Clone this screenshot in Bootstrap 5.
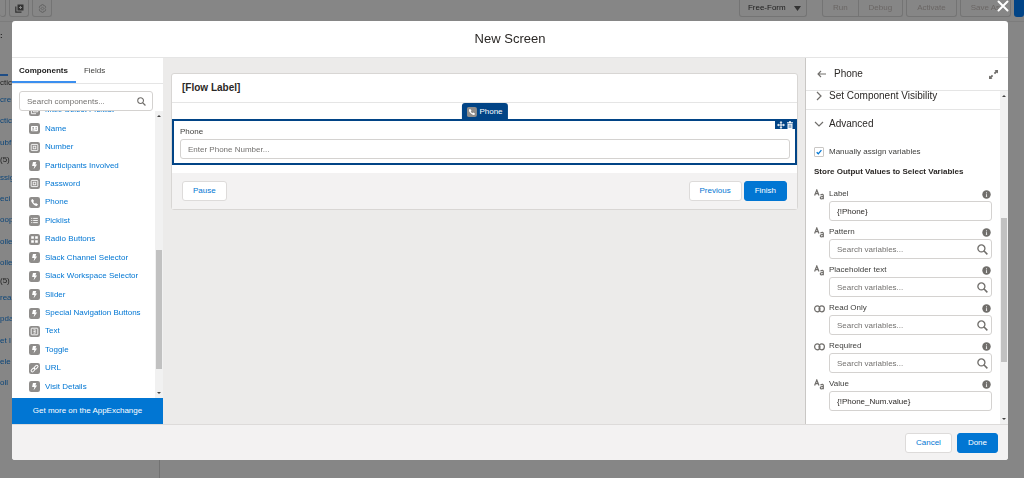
<!DOCTYPE html>
<html lang="en">
<head>
<meta charset="utf-8">
<meta name="viewport" content="width=device-width, initial-scale=1">
<title>New Screen</title>
<link href="https://cdn.jsdelivr.net/npm/bootstrap@5.3.0/dist/css/bootstrap.min.css" rel="stylesheet">
<style>
body{font-family:"Liberation Sans",Arial,sans-serif;font-size:8px;line-height:12px;color:#2b2826;background:#868686;overflow:hidden}
a{color:#0176d3;text-decoration:none}
svg{display:block;flex:none}
.backdrop-page{position:fixed;inset:0;color:#222}
.tb-row{height:22px;border-bottom:1px solid #7c7c7c}
.tb-btn{height:17px;border:1px solid #747474;border-top:0;border-radius:0 0 3px 3px;background:transparent;color:#6a6664;font-size:8px;line-height:12px;padding:0 10px}
.tb-edge{width:6px;padding:0;border-left:0}
.tb-icon{width:20px;padding:0;margin-left:3px}
.tb-select{color:#1c1c1c;width:68px;padding:0 5px 0 8px}
.tb-gap{margin-left:3px}
.tb-first{margin-left:15px;border-radius:0 0 0 3px}
.tb-last{border-left:0;border-radius:0 0 3px 0}
.tb-save{background:#014486;border:0;width:10px;padding:0}
.side-strip{width:160px;border-right:1px solid #727272}
.side-tab{height:55px;padding-top:8px;font-weight:700}
.side-tab span{display:block;width:8px;height:34px;border-bottom:2px solid #1f4d85}
.side-strip a{color:#0b4579}
.dlg-wrap{position:relative;height:100vh;padding:21px 16px 18px 12px}
.dlg{background:#fff;border-radius:3px;overflow:hidden}
.dlg-mid{min-height:0}
.dlg-head{height:37px;border-bottom:1px solid #e5e5e5}
.dlg-head h1{font-size:13px;line-height:16px}
.dlg-close{position:absolute;right:15px;top:0;width:12px;height:12px;background:none;border:0}
.dlg-foot{height:36px;background:#f3f2f2;border-top:1px solid #dddbda;padding:0 10px;gap:5px}
.btn-s{font-size:8px;line-height:12px;padding:3px 10px;border:1px solid #dddbda;border-radius:3px;background:#fff;color:#0176d3}
.btn-p{background:#0176d3;border-color:#0176d3;color:#fff}
.left-col{width:151px}
.tabs{height:26px;border-bottom:1px solid #e5e5e5;padding-top:1px}
.tabs button{font-size:8px;line-height:12px;border:0;background:none;padding:6px 8px;color:#3e3e3c}
.tabs .on{font-weight:700;border-bottom:2px solid #3b8fef;color:#222;padding-left:7px}
.find{position:relative;margin:7px 10px 0 7px}
.inp{width:100%;height:20px;border:1px solid #d4d2d0;border-radius:3px;padding:0 7px;font-size:8px;line-height:12px;color:#2b2826;background:#fff;display:block}
.inp::placeholder{color:#747270;opacity:1}
.find svg{position:absolute;right:7px;top:6px}
.comp-list{padding-bottom:2px;overflow:hidden}
.comp-row{flex:1 0 0;gap:5px;padding-left:17px}
.comp-row:first-child{margin-top:-10px}
.sbar{width:8px;background:#f1f1f1;padding:3px 1px}
.sthumb{background:#c1c1c1}
.exch{height:26px;background:#0176d3;color:#fff}
.canvas-col{background:#ecebea;padding:15px 7px 15px 8px;min-width:0}
.flow-box{background:#fff;border:1px solid #d8d6d4;border-radius:3px}
.flow-head{height:29px;border-bottom:1px solid #e5e5e5;padding-left:10px}
.h10{font-size:10px;line-height:14px}
.sel{position:relative;margin:16px 0 8px;border:2px solid #014486;padding:5px 5px 4px 6px}
.sel label{margin-bottom:1px;color:#3e3e3c}
.sel-tab{position:absolute;left:50%;top:-18px;transform:translateX(-50%);height:17px;background:#014486;color:#fff;border-radius:3px 3px 0 0;padding:0 5px;gap:3px}
.sel-act{position:absolute;right:-1px;top:-1px;background:#014486;width:21px;height:9px;gap:1px}
.flow-foot{background:#f3f2f2;height:36px;padding:0 10px;gap:2px}
.right-col{width:203px;border-left:1px solid #c9c7c5}
.rhead{height:33px;border-bottom:1px solid #e5e5e5;padding:0 10px 0 11px;gap:8px}
.acc{flex:none;height:28px;padding-left:8px;gap:5px;color:#3e3e3c}
.acc.h10{color:#2b2826}
.acc-top{border-bottom:1px solid #e5e5e5;margin-top:-9px}
.sub-head{padding:0 8px;height:21px}
.fld{flex:none;padding:0 8px;gap:4px;margin-bottom:4px}
.fld>svg{margin-top:2px}
.fld-lab{height:14px;padding-right:1px;color:#3e3e3c}
.fld-mag{position:absolute;right:4px;top:5px}
.chk{width:10px;height:10px;appearance:none;border:1px solid #c9c7c5;border-radius:1px;margin:0;background:#fff}
.chk-box{position:relative;width:10px;height:10px}
.chk-box svg{position:absolute;left:2px;top:2px;pointer-events:none}
</style>
<script src="https://cdn.jsdelivr.net/npm/bootstrap@5.3.0/dist/js/bootstrap.bundle.min.js"></script>
</head>
<body>
<svg width="0" height="0" class="position-absolute">
<defs>
<symbol id="mag" viewBox="0 0 10 10"><circle cx="4" cy="4" r="3.2" fill="none" stroke="#706e6b" stroke-width="1.2"/><path d="M6.2 6.2 9.4 9.4" stroke="#706e6b" stroke-width="1.4"/></symbol>
<symbol id="tile" viewBox="0 0 10 10"><rect width="10" height="10" rx="2" fill="#8f8d8b"/></symbol>
<symbol id="bolt" viewBox="0 0 10 10"><use href="#tile"/><path d="M3.6 1.8H6.6L5.8 4H7.4L4.2 8.3 4.9 5.4H2.8Z" fill="#fff"/></symbol>
<symbol id="boxed" viewBox="0 0 10 10"><use href="#tile"/><rect x="2" y="2.2" width="6" height="5.6" rx=".6" fill="none" stroke="#fff" stroke-width=".8"/><rect x="3.8" y="3.8" width="2.4" height="2.4" fill="none" stroke="#fff" stroke-width=".7"/></symbol>
<symbol id="idcard" viewBox="0 0 10 10"><use href="#tile"/><rect x="1.8" y="2.8" width="6.4" height="4.6" rx=".7" fill="#fff"/><circle cx="3.8" cy="4.4" r=".8" fill="#8f8d8b"/><path d="M2.7 6.4h2.2M5.8 4.3h1.5M5.8 5.7h1.5" stroke="#8f8d8b" stroke-width=".7"/></symbol>
<symbol id="tel" viewBox="0 0 10 10"><use href="#tile"/><path d="M2 2.7 3.2 1.8 4.6 3.7 3.8 4.5Q4.3 5.6 5.5 6.2L6.3 5.4 8.2 6.8 7.3 8Q5.9 8.5 3.7 6.3 1.6 4.2 2 2.7Z" fill="#fff"/></symbol>
<symbol id="rows" viewBox="0 0 10 10"><use href="#tile"/><path d="M2 3.1h1M3.8 3.1H8M2 5h1M3.8 5H8M2 6.9h1M3.8 6.9H8" stroke="#fff" stroke-width=".8"/></symbol>
<symbol id="radios" viewBox="0 0 10 10"><use href="#tile"/><path d="M2 2h2.4v2.4H2zM5.6 2H8v2.4H5.6zM2 5.6h2.4V8H2zM5.6 5.6H8V8H5.6z" fill="#fff"/></symbol>
<symbol id="txt" viewBox="0 0 10 10"><use href="#tile"/><rect x="2" y="2" width="6" height="6" rx=".6" fill="none" stroke="#fff" stroke-width=".8"/><path d="M4 3.5h1.6M4 5h1.6M4 6.5h1.6M5.6 3.2v3.6" stroke="#fff" stroke-width=".7"/></symbol>
<symbol id="chain" viewBox="0 0 10 10"><use href="#tile"/><g fill="none" stroke="#fff" stroke-width=".9"><rect x="4.6" y="2.6" width="3.8" height="2.2" rx="1.1" transform="rotate(-45 6.5 3.7)"/><rect x="1.7" y="5.3" width="3.8" height="2.2" rx="1.1" transform="rotate(-45 3.6 6.4)"/></g></symbol>
<symbol id="multi" viewBox="0 0 10 10"><use href="#tile"/><path d="M2.2 3.6v4.3h4.2M4 2.3h4v3.9H4z" fill="none" stroke="#fff" stroke-width=".8"/></symbol>
<symbol id="info" viewBox="0 0 10 10"><circle cx="5" cy="5" r="4.7" fill="#706e6b"/><path d="M5 2.5v1.2M4.4 4.7H5v2.4M4.3 7.1h1.4" stroke="#fff" stroke-width=".9"/></symbol>
<symbol id="bool" viewBox="0 0 11 11"><g fill="none" stroke="#706e6b" stroke-width="1.2"><ellipse cx="3.3" cy="5.8" rx="2.7" ry="3"/><ellipse cx="7.7" cy="5.8" rx="2.7" ry="3"/></g><path d="M5.5 4v3.6" stroke="#706e6b"/></symbol>
<symbol id="aa" viewBox="0 0 11 11"><path d="M.6 6.5 2.8 1 5 6.5M1.4 4.7H4.2" fill="none" stroke="#706e6b" stroke-width="1.2"/><path d="M6.4 6Q9.2 4.6 9.3 6.6V10.3M9.3 7.6Q6.2 7.3 6.3 9 6.5 10.6 9.3 9.2" fill="none" stroke="#706e6b" stroke-width="1.2"/></symbol>
<symbol id="up" viewBox="0 0 6 4"><path d="M1 3 3 1 5 3Z" fill="#444"/></symbol>
<symbol id="down" viewBox="0 0 6 4"><path d="M1 1 3 3 5 1Z" fill="#444"/></symbol>
</defs>
</svg>

<div class="backdrop-page d-flex flex-column" aria-hidden="true">
  <div class="tb-row d-flex align-items-start">
    <button class="tb-btn tb-edge"></button>
    <button class="tb-btn tb-icon d-flex align-items-center justify-content-center"><svg width="9" height="9" viewBox="0 0 9 9"><path d="M2.5.5h6v6h-6z" fill="#333"/><path d="M.8 2.5v5.7h5.7" fill="none" stroke="#333" stroke-width="1.2"/><path d="M5.5 2v3M4 3.5h3" stroke="#868686"/></svg></button>
    <button class="tb-btn tb-icon d-flex align-items-center justify-content-center"><svg width="9" height="9" viewBox="0 0 9 9"><path d="M3.7.6h1.6l.4 1.300 1.300-.2.8 1.400-.9 1.400.9 1.400-.8 1.400-1.300-.2-.4 1.300H3.700l-.4-1.300-1.300.2-.8-1.400.9-1.400-.9-1.400.8-1.400 1.300.2Z" fill="none" stroke="#666" stroke-width=".9"/><circle cx="4.5" cy="4.5" r="1.2" fill="none" stroke="#666" stroke-width=".8"/></svg></button>
    <button class="tb-btn tb-select ms-auto d-flex align-items-center justify-content-between">Free-Form<svg width="7" height="5" viewBox="0 0 7 5"><path d="M0 0h7L3.5 5Z" fill="#333"/></svg></button>
    <button class="tb-btn tb-first">Run</button>
    <button class="tb-btn tb-last">Debug</button>
    <button class="tb-btn tb-gap">Activate</button>
    <button class="tb-btn tb-gap">Save As</button>
    <button class="tb-btn tb-save tb-gap"></button>
  </div>
  <div class="side-strip flex-grow-1 d-flex flex-column">
    <div class="side-tab">:<span></span></div>
    <div style="height:17px">ctic</div>
    <div style="height:21px"><a href="#">cre</a></div>
    <div style="height:22px"><a href="#">ctic</a></div>
    <div style="height:17px"><a href="#">ubf</a></div>
    <div style="height:18px">(5)</div>
    <div style="height:21px"><a href="#">ssig</a></div>
    <div style="height:21px"><a href="#">eci</a></div>
    <div style="height:22px"><a href="#">oop</a></div>
    <div style="height:21px"><a href="#">olle</a></div>
    <div style="height:18px"><a href="#">olle</a></div>
    <div style="height:17px">(5)</div>
    <div style="height:21px"><a href="#">rea</a></div>
    <div style="height:22px"><a href="#">pda</a></div>
    <div style="height:21px"><a href="#">et l</a></div>
    <div style="height:21px"><a href="#">ele</a></div>
    <div><a href="#">oll</a></div>
  </div>
</div>

<div class="dlg-wrap">
  <button class="dlg-close p-0" aria-label="Close"><svg width="12" height="12" viewBox="0 0 12 12"><path d="M1.5 1.5l9 9M10.5 1.5l-9 9" stroke="#fff" stroke-width="2" stroke-linecap="round"/></svg></button>
  <div class="dlg h-100 d-flex flex-column" role="dialog" aria-label="New Screen">
    <header class="dlg-head flex-shrink-0 d-flex align-items-center justify-content-center"><h1 class="m-0 fw-normal">New Screen</h1></header>
    <div class="dlg-mid d-flex flex-grow-1">
      <aside class="left-col flex-shrink-0 d-flex flex-column">
        <div class="tabs d-flex flex-shrink-0"><button class="on">Components</button><button>Fields</button></div>
        <div class="find flex-shrink-0"><input class="inp" type="text" placeholder="Search components..." aria-label="Search components"><svg width="9" height="9"><use href="#mag"/></svg></div>
        <div class="dlg-mid d-flex flex-grow-1">
          <div class="comp-list d-flex flex-column flex-grow-1" id="comps"></div>
          <div class="sbar d-flex flex-column"><svg width="6" height="4"><use href="#up"/></svg><div style="flex:131"></div><div class="sthumb" style="flex:117"></div><div style="flex:22"></div><svg width="6" height="4"><use href="#down"/></svg></div>
        </div>
        <a href="#" class="exch flex-shrink-0 d-flex align-items-center justify-content-center">Get more on the AppExchange</a>
      </aside>
      <main class="canvas-col flex-grow-1">
        <div class="flow-box">
          <div class="flow-head d-flex align-items-center"><h2 class="h10 fw-bold m-0">[Flow Label]</h2></div>
          <div class="sel">
            <div class="sel-tab d-flex align-items-center"><svg width="10" height="10"><use href="#tel"/></svg>Phone</div>
            <div class="sel-act d-flex align-items-center justify-content-center"><svg width="8" height="8" viewBox="0 0 8 8"><path d="M4 1v6M1 4h6" stroke="#fff"/><path d="M4 0l1.5 1.7h-3ZM4 8l1.5-1.7h-3ZM0 4l1.7-1.5v3ZM8 4l-1.7-1.5v3Z" fill="#fff"/></svg><svg width="8" height="8" viewBox="0 0 8 8"><path d="M1 1.2h6v1H1zM3 .3h2v1H3zM1.5 2.8h5V8h-5z" fill="#fff"/><path d="M3.2 3.6v3.4M4.8 3.6v3.4" stroke="#014486" stroke-width=".6"/></svg></div>
            <label for="ph" class="d-block">Phone</label>
            <input id="ph" class="inp" type="tel" placeholder="Enter Phone Number...">
          </div>
          <div class="flow-foot d-flex align-items-center"><button class="btn-s me-auto">Pause</button><button class="btn-s">Previous</button><button class="btn-s btn-p">Finish</button></div>
        </div>
      </main>
      <aside class="right-col flex-shrink-0 d-flex flex-column">
        <div class="rhead flex-shrink-0 d-flex align-items-center"><svg width="9" height="8" viewBox="0 0 9 8"><path d="M9 4H1M4 1 1 4l3 3" fill="none" stroke="#706e6b" stroke-width="1.1"/></svg><h2 class="h10 fw-normal m-0 me-auto">Phone</h2><svg width="9" height="9" viewBox="0 0 9 9"><path d="M5.5 0H9v3.5L7.9 2.4 6 4.2 4.8 3 6.6 1.1ZM0 5.5V9h3.5L2.4 7.9 4.2 6 3 4.8 1.1 6.6Z" fill="#706e6b"/></svg></div>
        <div class="dlg-mid d-flex flex-grow-1">
          <div class="flex-grow-1 d-flex flex-column overflow-hidden" id="props">
            <div class="overflow-hidden flex-shrink-0"><div class="acc acc-top d-flex align-items-center h10"><svg width="10" height="10" viewBox="0 0 10 10"><path d="M3 1l4 4-4 4" fill="none" stroke="#706e6b" stroke-width="1.2"/></svg>Set Component Visibility</div></div>
            <div class="acc d-flex align-items-center h10"><svg width="10" height="10" viewBox="0 0 10 10"><path d="M1 3l4 4 4-4" fill="none" stroke="#706e6b" stroke-width="1.2"/></svg>Advanced</div>
            <div class="acc d-flex align-items-center"><span class="chk-box"><input class="chk d-block" type="checkbox" id="man" checked><svg width="6" height="6" viewBox="0 0 6 6"><path d="M.7 3.2 2.3 4.8 5.4 1.2" fill="none" stroke="#0176d3" stroke-width="1.3"/></svg></span><label for="man">Manually assign variables</label></div>
            <div class="sub-head fw-bold flex-shrink-0">Store Output Values to Select Variables</div>
          </div>
          <div class="sbar d-flex flex-column"><svg width="6" height="4"><use href="#up"/></svg><div style="flex:120"></div><div class="sthumb" style="flex:143"></div><div style="flex:55"></div><svg width="6" height="4"><use href="#down"/></svg></div>
        </div>
      </aside>
    </div>
    <footer class="dlg-foot flex-shrink-0 d-flex align-items-center justify-content-end"><button class="btn-s">Cancel</button><button class="btn-s btn-p">Done</button></footer>
  </div>
</div>
<script>
const comps=[["multi","Multi-Select Picklist"],["idcard","Name"],["boxed","Number"],["bolt","Participants Involved"],["boxed","Password"],["tel","Phone"],["rows","Picklist"],["radios","Radio Buttons"],["bolt","Slack Channel Selector"],["bolt","Slack Workspace Selector"],["bolt","Slider"],["bolt","Special Navigation Buttons"],["txt","Text"],["bolt","Toggle"],["chain","URL"],["bolt","Visit Details"]];
document.getElementById("comps").innerHTML=comps.map(c=>`<a href="#" class="comp-row d-flex align-items-center"><svg width="11" height="11"><use href="#${c[0]}"/></svg>${c[1]}</a>`).join("");
const fields=[["aa","Label","{!Phone}"],["aa","Pattern",""],["aa","Placeholder text",""],["bool","Read Only",""],["bool","Required",""],["aa","Value","{!Phone_Num.value}"]];
document.getElementById("props").insertAdjacentHTML("beforeend",fields.map((f,i)=>`<div class="fld d-flex"><svg width="11" height="11"><use href="#${f[0]}"/></svg><div class="flex-grow-1"><div class="fld-lab d-flex align-items-center justify-content-between"><label for="f${i}">${f[1]}</label><svg width="9" height="9"><use href="#info"/></svg></div><div class="position-relative"><input class="inp" id="f${i}" type="text" value="${f[2]}" placeholder="Search variables...">${f[2]?"":'<svg class="fld-mag" width="11" height="11"><use href="#mag"/></svg>'}</div></div></div>`).join(""));
</script>
</body>
</html>
